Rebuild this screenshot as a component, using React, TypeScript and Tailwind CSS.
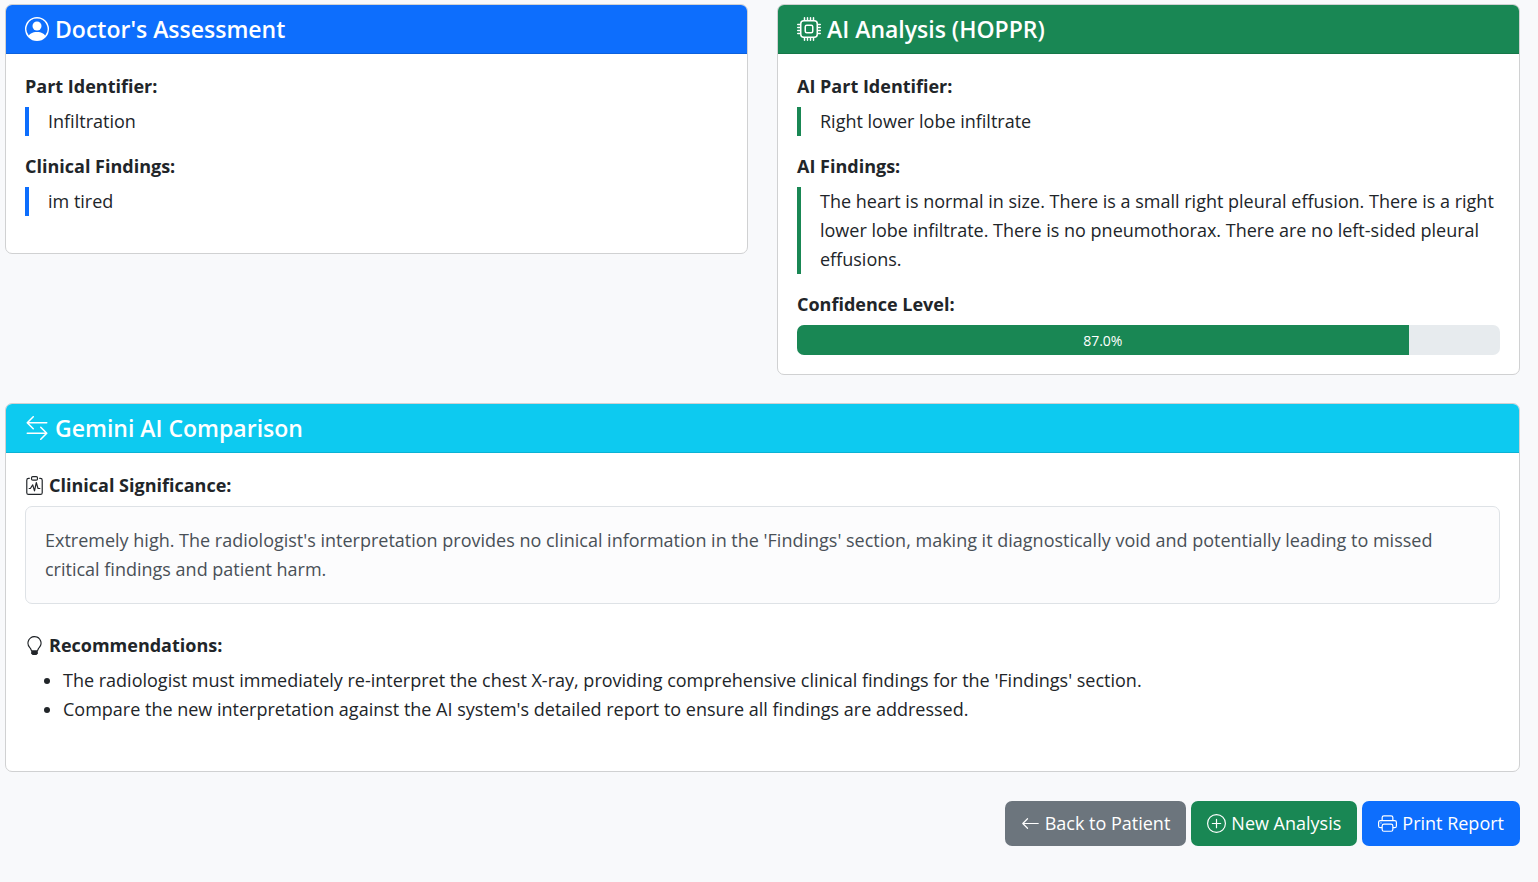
import type { ReactNode } from 'react'
import {
  BsArrowLeft,
  BsArrowLeftRight,
  BsClipboardPulse,
  BsCpu,
  BsLightbulb,
  BsPersonCircle,
  BsPlusCircle,
  BsPrinter,
} from 'react-icons/bs'

const confidence = 87

const recommendations = [
  "The radiologist must immediately re-interpret the chest X-ray, providing comprehensive clinical findings for the 'Findings' section.",
  "Compare the new interpretation against the AI system's detailed report to ensure all findings are addressed.",
]

type CardProps = {
  title: string
  icon: ReactNode
  headerClass: string
  children: ReactNode
}

function Card({ title, icon, headerClass, children }: CardProps) {
  return (
    <section className="overflow-hidden rounded-[7px] border border-[#d0d1d2] bg-white">
      <header className={`flex h-[49px] items-center gap-[6px] border-b px-[19px] text-white ${headerClass}`}>
        {icon}
        <h2 className="text-[23px] font-semibold leading-[29px]">{title}</h2>
      </header>
      <div className="px-[19px] pt-5 pb-[19px]">{children}</div>
    </section>
  )
}

function Label({ icon, children }: { icon?: ReactNode; children: ReactNode }) {
  return (
    <h3 className="mb-[9px] flex items-center gap-[5px] text-[18px] font-bold leading-[24px]">
      {icon}
      {children}
    </h3>
  )
}

function Finding({ barClass, children }: { barClass: string; children: ReactNode }) {
  return <p className={`mb-[18px] border-l-4 pl-[19px] leading-[29px] ${barClass}`}>{children}</p>
}

const buttonClass = 'flex h-[45px] items-center gap-[5px] rounded-[7px] px-4 text-white'

export default function App() {
  return (
    <main className="min-h-screen bg-[#f8f9fb] pt-1 pr-[18px] pb-9 pl-[5px] font-['Open_Sans',sans-serif] text-[18px] leading-[29px] text-[#212529]">
      <div className="grid grid-cols-2 items-start gap-[29px]">
        <Card
          title="Doctor's Assessment"
          icon={<BsPersonCircle className="size-6" />}
          headerClass="border-[#0c61de] bg-[#0d6efd]"
        >
          <Label>Part Identifier:</Label>
          <Finding barClass="border-[#0d6efd]">Infiltration</Finding>
          <Label>Clinical Findings:</Label>
          <Finding barClass="border-[#0d6efd]">im tired</Finding>
        </Card>

        <Card
          title="AI Analysis (HOPPR)"
          icon={<BsCpu className="size-6" />}
          headerClass="border-[#167749] bg-[#198754]"
        >
          <Label>AI Part Identifier:</Label>
          <Finding barClass="border-[#198754]">Right lower lobe infiltrate</Finding>
          <Label>AI Findings:</Label>
          <Finding barClass="border-[#198754]">
            The heart is normal in size. There is a small right pleural effusion. There is a right lower lobe
            infiltrate. There is no pneumothorax. There are no left-sided pleural effusions.
          </Finding>
          <Label>Confidence Level:</Label>
          <div
            role="progressbar"
            aria-label="Confidence Level"
            aria-valuenow={confidence}
            aria-valuemin={0}
            aria-valuemax={100}
            className="h-[30px] overflow-hidden rounded-[7px] bg-[#e7ebee]"
          >
            <div
              className="flex h-full items-center justify-center bg-[#198754] text-[14px] text-white"
              style={{ width: `${confidence}%` }}
            >
              {confidence.toFixed(1)}%
            </div>
          </div>
        </Card>
      </div>

      <div className="mt-7">
        <Card
          title="Gemini AI Comparison"
          icon={<BsArrowLeftRight className="size-6" />}
          headerClass="border-[#0bb2d4] bg-[#0dcaf0]"
        >
          <Label icon={<BsClipboardPulse className="size-[19px]" />}>Clinical Significance:</Label>
          <p className="mb-[29px] rounded-[7px] border border-[#dee2e6] bg-[#fcfcfd] p-[19px] text-[#495057]">
            Extremely high. The radiologist's interpretation provides no clinical information in the 'Findings'
            section, making it diagnostically void and potentially leading to missed critical findings and patient
            harm.
          </p>
          <Label icon={<BsLightbulb className="size-[19px]" />}>Recommendations:</Label>
          <ul className="mb-7 list-disc pl-[38px]">
            {recommendations.map((item) => (
              <li key={item}>{item}</li>
            ))}
          </ul>
        </Card>
      </div>

      <div className="mt-[29px] flex justify-end gap-[5px]">
        <a href="#patient" className={`${buttonClass} bg-[#6c757d]`}>
          <BsArrowLeft className="size-[19px]" />
          Back to Patient
        </a>
        <a href="#new-analysis" className={`${buttonClass} bg-[#198754]`}>
          <BsPlusCircle className="size-[19px]" />
          New Analysis
        </a>
        <button type="button" onClick={() => window.print()} className={`${buttonClass} bg-[#0d6efd]`}>
          <BsPrinter className="size-[19px]" />
          Print Report
        </button>
      </div>
    </main>
  )
}
